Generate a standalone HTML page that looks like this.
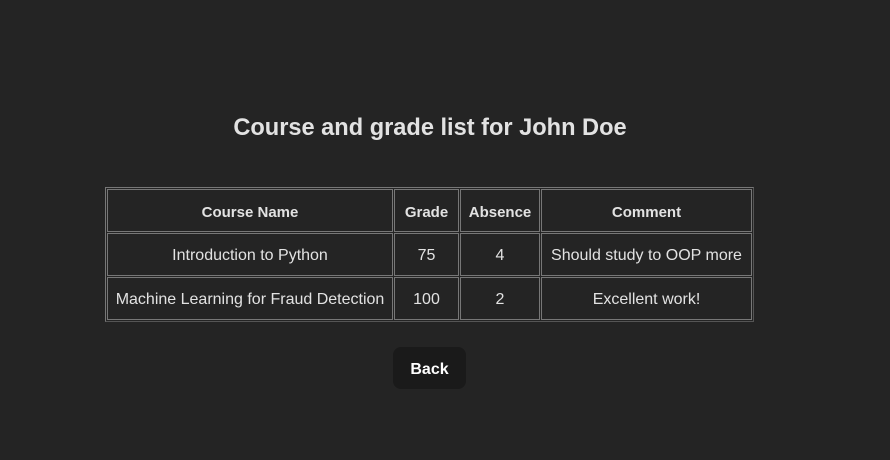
<!DOCTYPE html>
<html><head><style>
body{margin:0;background:#242424;width:890px;height:460px;font-family:"Liberation Sans",sans-serif;color:rgba(255,255,255,0.87);position:relative;overflow:hidden}
h1{position:absolute;top:115px;left:0;width:860px;text-align:center;margin:0;font-size:23.6px;font-weight:bold}
table{position:absolute;left:105px;top:187px;border:1px solid #777;border-right-color:#555;border-bottom-color:#555;border-spacing:1px;border-collapse:separate}
td,th{border:1px solid #777;height:38px;padding:3px 0 0 0;box-sizing:content-box;text-align:center;font-size:16px;vertical-align:middle}
th{font-weight:bold;font-size:15px}
.b{position:absolute;left:393px;top:347px;width:73px;height:42px;background:#1a1a1a;border-radius:8px;font-weight:bold;font-size:16px;line-height:45px;text-align:center;color:#fff}
</style></head><body>
<h1>Course and grade list for John Doe</h1>
<table>
<tr><th style="width:284px">Course Name</th><th style="width:63px">Grade</th><th style="width:78px">Absence</th><th style="width:209px">Comment</th></tr>
<tr><td>Introduction to Python</td><td>75</td><td>4</td><td>Should study to OOP more</td></tr>
<tr><td>Machine Learning for Fraud Detection</td><td>100</td><td>2</td><td>Excellent work!</td></tr>
</table>
<div class="b">Back</div>
</body></html>
